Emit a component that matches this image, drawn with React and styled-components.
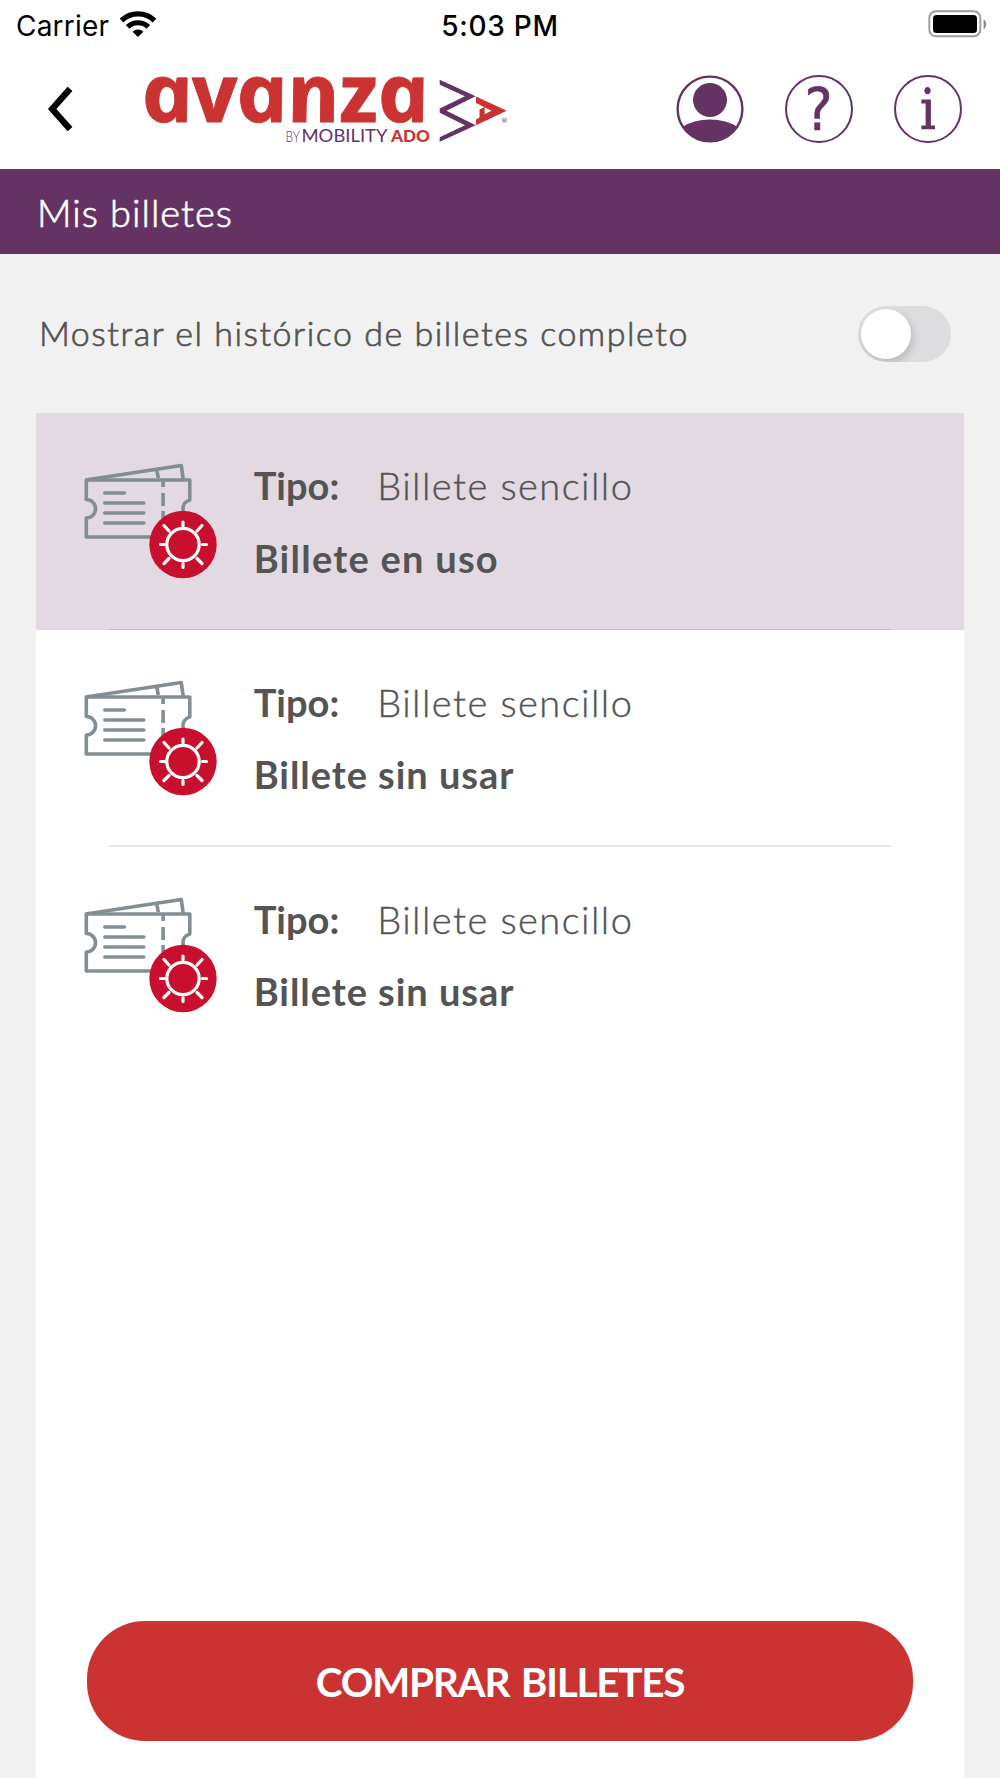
import styled, { createGlobalStyle } from "styled-components";

const colors = {
  purple: "#653264",
  red: "#cb3333",
  crimson: "#c80f2e",
  text: "#545454",
  page: "#f1f1f1",
  selected: "#e3d9e2",
  ticket: "#838e92",
};

const tickets = [
  { id: 1, type: "Billete sencillo", status: "Billete en uso", active: true },
  { id: 2, type: "Billete sencillo", status: "Billete sin usar", active: false },
  { id: 3, type: "Billete sencillo", status: "Billete sin usar", active: false },
];

// ─── Icons ────────────────────────────────────────────────────
function WifiIcon() {
  return (
    <svg width="38" height="28" viewBox="0 0 38 28">
      <path d="M2.5 10.5a24 24 0 0 1 33 0" fill="none" stroke="#000" strokeWidth="5.2" />
      <path d="M8.6 16.8a15.4 15.4 0 0 1 20.8 0" fill="none" stroke="#000" strokeWidth="5.2" />
      <path d="M19 27l-5.4-5.3a8 8 0 0 1 10.8 0z" />
    </svg>
  );
}

function BatteryIcon() {
  return (
    <svg width="60" height="28" viewBox="0 0 60 28">
      <rect x="1.3" y="1.3" width="51" height="25" rx="6.5" fill="none" stroke="#9b9b9b" strokeWidth="1.9" />
      <rect x="5" y="5" width="44" height="18" rx="3.5" />
      <path d="M55.6 9.2c3.4 1.6 3.4 8.4 0 10z" fill="#8a8a8a" />
    </svg>
  );
}

function BackIcon() {
  return (
    <svg width="26" height="46" viewBox="0 0 26 46">
      <path d="M23 2.8L5.2 23 23 43.2" fill="none" stroke="#000" strokeWidth="6.4" />
    </svg>
  );
}

function Logo() {
  return (
    <LogoSvg width="370" height="76" viewBox="0 0 370 76">
      <text
        transform="translate(1 51) skewX(12)"
        fontFamily="Open Sans"
        fontStyle="italic"
        fontWeight="700"
        fontSize="81"
        letterSpacing="-1"
        fill={colors.red}
        stroke={colors.red}
        strokeWidth=".8"
        textLength="287"
        lengthAdjust="spacingAndGlyphs"
      >
        avanza
      </text>
      <g fontFamily="Lato" fontSize="17.3">
        <text x="140.5" y="71" fontSize="16" fontWeight="300" fill={colors.purple} textLength="14.5" lengthAdjust="spacingAndGlyphs">BY</text>
        <text x="156.5" y="71" fill={colors.purple} textLength="86" lengthAdjust="spacingAndGlyphs">MOBILITY</text>
        <text x="246" y="71" fontWeight="900" fill={colors.red} textLength="39" lengthAdjust="spacingAndGlyphs">ADO</text>
      </g>
      <path
        d="M294.7 8.8l36 16.4-29.2 14.6 29.2 14.4-36 16.6v-4.600l25.300-12-25.300-12.400v-4.300l25.300-12.300-25.300-11.400z"
        fill={colors.purple}
      />
      <path
        d="M331 25.5l30.7 14.3L331 54.2v-5.700l3.500-2v-8l5.200-2.500v7.300l6.800-3.500L331 32z"
        fill={colors.red}
      />
      <circle cx="359.5" cy="49" r="2.3" fill="none" stroke="#a98fa9" strokeWidth=".8" />
      <text x="357.9" y="50.7" fontFamily="Lato" fontSize="4.5" fill={colors.purple}>R</text>
    </LogoSvg>
  );
}

function UserIcon() {
  return (
    <svg width="68" height="68" viewBox="0 0 68 68">
      <clipPath id="userClip">
        <circle cx="34" cy="34" r="33" />
      </clipPath>
      <circle cx="34" cy="34" r="32.4" fill="none" stroke={colors.purple} strokeWidth="2.4" />
      <circle cx="34" cy="25" r="17" fill={colors.purple} />
      <ellipse cx="34" cy="71" rx="40" ry="26.5" fill={colors.purple} clipPath="url(#userClip)" />
    </svg>
  );
}

function TicketIcon() {
  return (
    <svg width="136" height="120" viewBox="0 0 136 120">
      <g transform="translate(.8 0)" fill="none" stroke={colors.ticket} strokeWidth="3.6" strokeLinejoin="round">
        <path d="M3 18L98.5 3.5l2 14.5M74 8l1.5 8" />
        <path d="M3.5 18H107v20a9 9 0 0 0 0 17.5V75H3.500V56a9 9 0 0 0 0-18.500z" />
        <path d="M80.3 18v7m0 6v13m0 5v14" />
        <path d="M22 31h19.5M22 41h39M22 51h39M22 61h39" strokeLinecap="round" />
      </g>
      <circle cx="101" cy="82.5" r="33.7" fill={colors.crimson} />
      <g fill="none" stroke="#fff" strokeWidth="3.2" strokeLinecap="round">
        <circle cx="101" cy="82.5" r="16.2" />
        <path d="M101 60v4M101 101.500v4M78.500 82.500h4M120.500 82.500h4M82 63.500l5 5.500M120 63.500l-5 5.500M82 101.500l5-5M120 101.500l-5-5" />
      </g>
    </svg>
  );
}

// ─── Component ────────────────────────────────────────────────
export default function App() {
  return (
    <Screen>
      <GlobalStyle />
      <StatusBar>
        <Carrier>
          <CarrierName>Carrier</CarrierName>
          <WifiIcon />
        </Carrier>
        <Clock>5:03 PM</Clock>
        <BatterySlot>
          <BatteryIcon />
        </BatterySlot>
      </StatusBar>

      <Header>
        <BackButton aria-label="Volver">
          <BackIcon />
        </BackButton>
        <Logo />
        <Actions>
          <UserIcon />
          <RoundButton>
            <QuestionMark>?</QuestionMark>
          </RoundButton>
          <RoundButton>
            <InfoMark>i</InfoMark>
          </RoundButton>
        </Actions>
      </Header>

      <TitleBar>
        <Title>Mis billetes</Title>
      </TitleBar>

      <HistoryRow>
        <HistoryLabel>Mostrar el histórico de billetes completo</HistoryLabel>
        <Toggle role="switch" aria-checked="false">
          <Knob />
        </Toggle>
      </HistoryRow>

      <Panel>
        <TicketList>
          {tickets.map((ticket) => (
            <TicketRow key={ticket.id} $active={ticket.active}>
              <TicketIcon />
              <TicketInfo>
                <TypeLine>
                  <TypeLabel>Tipo:</TypeLabel>
                  <TypeValue>{ticket.type}</TypeValue>
                </TypeLine>
                <Status $active={ticket.active}>{ticket.status}</Status>
              </TicketInfo>
            </TicketRow>
          ))}
        </TicketList>
        <BuyButton>COMPRAR BILLETES</BuyButton>
      </Panel>
    </Screen>
  );
}

// ─── Styled Components ────────────────────────────────────────
const GlobalStyle = createGlobalStyle`
  * {
    box-sizing: border-box;
  }
  body {
    margin: 0;
    background: ${colors.page};
  }
  svg {
    display: block;
    flex-shrink: 0;
  }
`;

const Screen = styled.div`
  width: 1000px;
  height: 1778px;
  display: flex;
  flex-direction: column;
  overflow: hidden;
  background: ${colors.page};
  color: ${colors.text};
  font-family: "Century Gothic", Lato, sans-serif;
  white-space: nowrap;
`;

/* ── Status bar ── */

const StatusBar = styled.div`
  display: grid;
  grid-template-columns: 1fr auto 1fr;
  align-items: center;
  height: 50px;
  padding: 0 12px 2px 16px;
  background: #fff;
  color: #000;
  font-family: Inter, sans-serif;
  font-size: 28px;
`;

const Carrier = styled.div`
  display: flex;
  align-items: center;
  gap: 10px;
`;

const CarrierName = styled.span`
  padding-top: 3px;
  letter-spacing: 0.2px;
`;

const Clock = styled.span`
  padding: 3px 4px 0 0;
  font-weight: 500;
  letter-spacing: 0.7px;
`;

const BatterySlot = styled.div`
  display: flex;
  justify-content: flex-end;
`;

/* ── Header ── */

const Header = styled.header`
  display: flex;
  align-items: center;
  height: 119px;
  padding: 0 38.3px 2px 47px;
  background: #fff;
`;

const LogoSvg = styled.svg`
  overflow: visible;
`;

const BackButton = styled.button`
  width: 98px;
  padding: 0;
  border: 0;
  background: none;
`;

const Actions = styled.div`
  display: flex;
  gap: 41px;
  margin-left: auto;
`;

const RoundButton = styled.div`
  display: flex;
  align-items: center;
  justify-content: center;
  width: 68px;
  height: 68px;
  border: 2.4px solid ${colors.purple};
  border-radius: 50%;
  color: ${colors.purple};
`;

const QuestionMark = styled.span`
  padding-top: 2px;
  font: 400 59px/1 "DejaVu Sans Condensed", "DejaVu Sans", sans-serif;
  -webkit-text-stroke: 0.6px ${colors.purple};
`;

const InfoMark = styled.span`
  padding-top: 2px;
  font: 400 56px/1 "DejaVu Serif", serif;
  -webkit-text-stroke: 0.9px ${colors.purple};
  transform: scaleX(0.88);
`;

/* ── Title ── */

const TitleBar = styled.div`
  display: flex;
  align-items: center;
  height: 84.5px;
  padding: 1px 0 0 37px;
  background: ${colors.purple};
`;

const Title = styled.h1`
  margin: 0;
  color: #fff;
  font-size: 38px;
  font-weight: 300;
  letter-spacing: 1px;
  -webkit-text-stroke: 0.7px #fff;
`;

/* ── History filter ── */

const HistoryRow = styled.div`
  display: flex;
  align-items: center;
  justify-content: space-between;
  height: 159.5px;
  padding: 1px 49px 0 39px;
`;

const HistoryLabel = styled.span`
  padding-bottom: 2px;
  font-size: 34px;
  font-weight: 300;
  letter-spacing: 1.52px;
  -webkit-text-stroke: 0.7px ${colors.text};
`;

const Toggle = styled.div`
  width: 93px;
  height: 56px;
  padding: 3px;
  border-radius: 28px;
  background: #dddddf;
  overflow: hidden;
`;

const Knob = styled.div`
  width: 50px;
  height: 50px;
  border-radius: 50%;
  background: #fff;
  box-shadow: 2px 4px 8px rgba(0, 0, 0, 0.16);
`;

/* ── Ticket list ── */

const Panel = styled.main`
  flex: 1;
  display: flex;
  flex-direction: column;
  justify-content: space-between;
  margin: 0 36px;
  padding-bottom: 37px;
  background: #fff;
`;

const TicketList = styled.div`
  display: flex;
  flex-direction: column;
`;

const TicketRow = styled.article`
  display: flex;
  height: 216.9px;
  padding: 49px 0 0 46.3px;
  background: ${({ $active }) =>
    $active
      ? `linear-gradient(#c2bac3, #c2bac3) 73px 100% / 782px 1px no-repeat, ${colors.selected}`
      : "linear-gradient(#e5e5e5, #e5e5e5) 73px 100% / 782px 2px no-repeat, #fff"};

  &:last-child {
    background: #fff;
  }
`;

const TicketInfo = styled.div`
  display: flex;
  flex-direction: column;
  gap: 26.6px;
  padding-left: 35.4px;
  font-size: 38px;
  line-height: 46px;
`;

const TypeLine = styled.div`
  display: flex;
`;

const TypeLabel = styled.strong`
  width: 123.5px;
`;

const TypeValue = styled.span`
  font-weight: 300;
  letter-spacing: 1.45px;
  -webkit-text-stroke: 0.4px ${colors.text};
`;

const Status = styled.strong`
  letter-spacing: ${({ $active }) => ($active ? "1.25px" : "0.95px")};
`;

/* ── Footer ── */

const BuyButton = styled.button`
  height: 120.5px;
  margin: 0 51px;
  padding-top: 3px;
  border: 0;
  border-radius: 58px;
  background: ${colors.red};
  color: #fff;
  font: 700 40.5px/1 "Century Gothic", Lato, sans-serif;
  letter-spacing: -1.3px;
  word-spacing: 3px;
`;
